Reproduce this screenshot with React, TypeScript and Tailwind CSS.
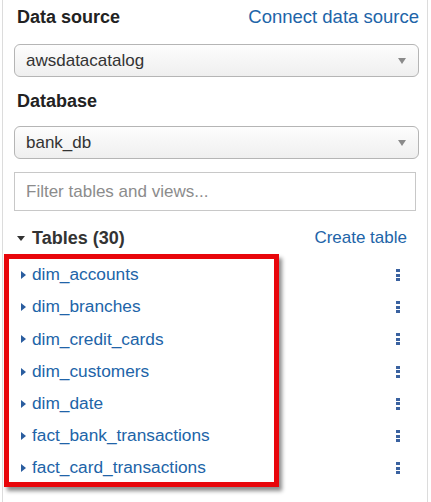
import { ReactNode } from "react";

const tables = [
  "dim_accounts",
  "dim_branches",
  "dim_credit_cards",
  "dim_customers",
  "dim_date",
  "fact_bank_transactions",
  "fact_card_transactions",
];

function Select({ children }: { children: ReactNode }) {
  return (
    <div className="flex h-[33px] items-center justify-between rounded-[6px] border border-[#b5b5b5] bg-gradient-to-b from-[#fdfdfd] to-[#efefef] pl-[11px] pr-[12px] text-[17px] text-[#333]">
      <span>{children}</span>
      <span className="h-0 w-0 border-x-[4px] border-t-[6px] border-x-transparent border-t-[#8a8a8a]" />
    </div>
  );
}

function Kebab() {
  return (
    <span className="flex w-[4px] flex-col gap-[1.5px]">
      <span className="h-[3px] w-[4px] bg-[#3a62a0]" />
      <span className="h-[3px] w-[4px] bg-[#3a62a0]" />
      <span className="h-[3px] w-[4px] bg-[#3a62a0]" />
    </span>
  );
}

export default function App() {
  return (
    <div className="min-h-[502px] w-[431px] bg-white font-['Liberation_Sans',Arial,sans-serif]">
      <div className="relative ml-[2px] h-[502px] w-[426px] border-x border-[#dcdcdc] pl-[11px] pr-[8px] pt-[5px]">
        <div className="flex h-[24px] items-center justify-between pl-[3px]">
          <span className="text-[18px] font-bold text-[#222]">Data source</span>
          <span className="text-[18.5px] text-[#2164a8]">Connect data source</span>
        </div>
        <div className="mt-[15px]">
          <Select>awsdatacatalog</Select>
        </div>
        <div className="mt-[12px] flex h-[24px] items-center pl-[3px]">
          <span className="text-[18px] font-bold text-[#222]">Database</span>
        </div>
        <div className="mt-[13px]">
          <Select>bank_db</Select>
        </div>
        <div className="mr-[3px] mt-[13px] flex h-[39px] items-center border border-[#c8c8c8] bg-white pl-[11px] text-[17px] text-[#8c8c8c]">
          Filter tables and views...
        </div>
        <div className="mt-[16px] flex h-[22px] items-center justify-between pl-[3px] pr-[12px]">
          <div className="flex items-center gap-[7px]">
            <span className="h-0 w-0 border-x-[4.5px] border-t-[5px] border-x-transparent border-t-[#333]" />
            <span className="text-[18px] font-bold text-[#333]">Tables (30)</span>
          </div>
          <span className="text-[17px] text-[#2164a8]">Create table</span>
        </div>
        <div className="mt-[10px] flex flex-col">
          {tables.map((t) => (
            <div key={t} className="flex h-[32.2px] items-center justify-between pl-[7px] pr-[19px]">
              <div className="flex items-center gap-[6px]">
                <span className="h-0 w-0 border-y-[4.5px] border-l-[5px] border-y-transparent border-l-[#2a5d9f]" />
                <span className="text-[17.3px] text-[#2164a8]">{t}</span>
              </div>
              <Kebab />
            </div>
          ))}
        </div>
        <div className="absolute left-[1px] top-[254px] h-[233px] w-[275px] border-[5px] border-[#e8060b] shadow-[3px_4px_4px_rgba(0,0,0,0.45)]" />
      </div>
    </div>
  );
}
